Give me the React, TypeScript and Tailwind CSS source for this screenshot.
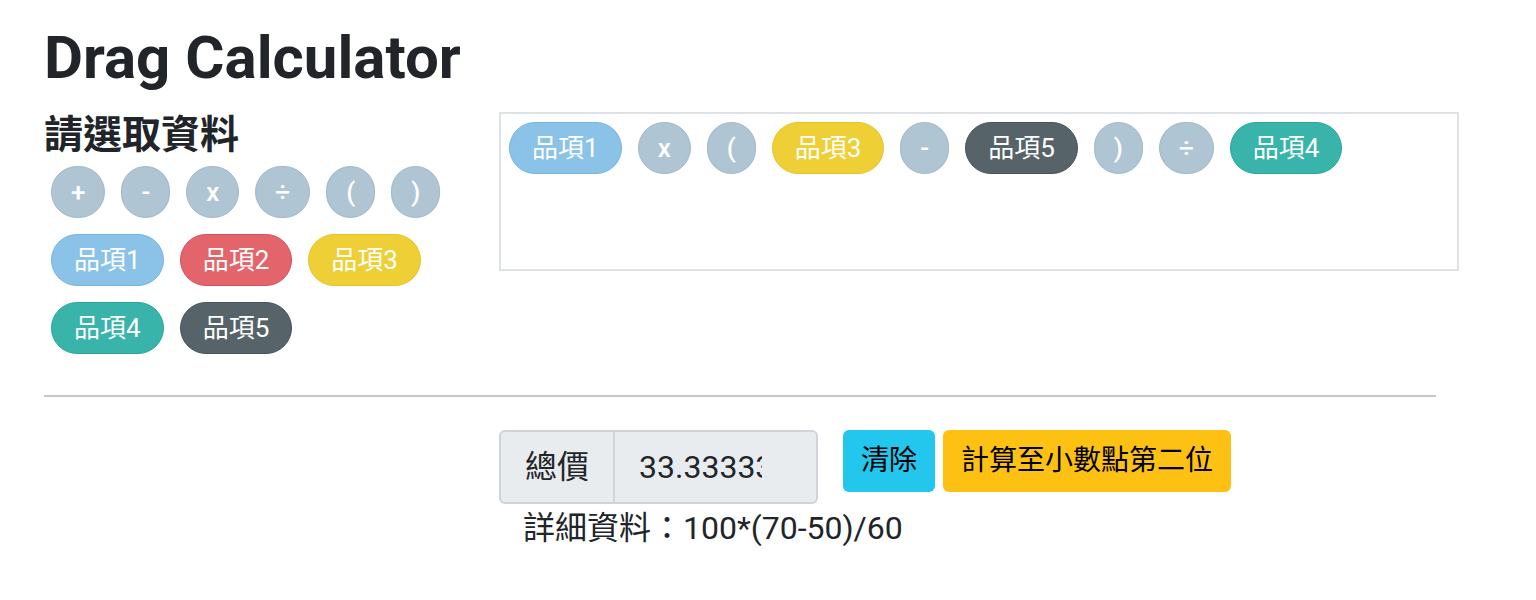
import React from 'react';

type Tone = 'op' | 'sky' | 'red' | 'yellow' | 'teal' | 'slate';

const toneClass: Record<Tone, string> = {
  op: 'bg-[#b0c5d4] border-[#9fb8cb]',
  sky: 'bg-[#8bc3e8] border-[#76b4e3]',
  red: 'bg-[#e4646c] border-[#d9525a]',
  yellow: 'bg-[#eecf36] border-[#e6c428]',
  teal: 'bg-[#38b4aa] border-[#2ca69b]',
  slate: 'bg-[#566469] border-[#48555a]',
};

function Pill({ label, tone }: { label: string; tone: Tone }) {
  return (
    <span
      className={`m-2 inline-flex h-[52px] items-center rounded-full border text-[26px] text-white ${
        tone === 'op' ? 'px-[19px] font-medium' : 'px-[22px] font-normal'
      } ${toneClass[tone]}`}>
      {label}
    </span>
  );
}

const operators = ['+', '-', 'x', '÷', '(', ')'];

const items: { label: string; tone: Tone }[] = [
  { label: '品項1', tone: 'sky' },
  { label: '品項2', tone: 'red' },
  { label: '品項3', tone: 'yellow' },
  { label: '品項4', tone: 'teal' },
  { label: '品項5', tone: 'slate' },
];

// the expression the user has dragged into the drop area
const formula: { label: string; tone: Tone }[] = [
  { label: '品項1', tone: 'sky' },
  { label: 'x', tone: 'op' },
  { label: '(', tone: 'op' },
  { label: '品項3', tone: 'yellow' },
  { label: '-', tone: 'op' },
  { label: '品項5', tone: 'slate' },
  { label: ')', tone: 'op' },
  { label: '÷', tone: 'op' },
  { label: '品項4', tone: 'teal' },
];

export default function App() {
  return (
    <div className="min-h-[600px] bg-white pl-[44px] pt-[22px] font-['Roboto','Noto_Sans_CJK_TC',sans-serif] text-[#212529]">
      <h1 className="text-[60px] leading-[72px] font-bold">Drag Calculator</h1>

      <div className="mt-[18px] flex">
        <div className="w-[455px] shrink-0">
          <h3 className="text-[39px] leading-[46px] font-bold">請選取資料</h3>
          <div className="-ml-px flex flex-wrap">
            {operators.map((op) => (
              <Pill key={op} label={op} tone="op" />
            ))}
          </div>
          <div className="-ml-px flex flex-wrap">
            {items.map((it) => (
              <Pill key={it.label} label={it.label} tone={it.tone} />
            ))}
          </div>
        </div>

        <div className="flex h-[159px] w-[960px] flex-wrap content-start self-start border-2 border-[#dde2e6]">
          {formula.map((f, i) => (
            <Pill key={i} label={f.label} tone={f.tone} />
          ))}
        </div>
      </div>

      <hr className="mt-[33px] w-[1392px] border-t-2 border-[#c8c8c8]" />

      <div className="mt-[33px] ml-[455px]">
        <div className="flex items-start">
          <div className="flex h-[74px] w-[319px] overflow-hidden rounded-[6px] border-2 border-[#ced4da] bg-[#e9ecef] text-[32px]">
            <div className="flex items-center border-r-2 border-[#ced4da] px-6">總價</div>
            <div className="flex items-center pl-[24px]">
              <div className="w-[123px] overflow-hidden whitespace-nowrap">33.333333333333336</div>
            </div>
          </div>
          <button className="ml-[25px] h-[62px] rounded-[6px] bg-[#23c7ee] px-[18px] text-[28px] text-black">清除</button>
          <button className="ml-2 h-[62px] rounded-[6px] bg-[#fdc113] px-[18px] text-[28px] text-black">計算至小數點第二位</button>
        </div>
        <div className="mt-[2px] pl-6 text-[32px] leading-[44px]">詳細資料：100*(70-50)/60</div>
      </div>
    </div>
  );
}
